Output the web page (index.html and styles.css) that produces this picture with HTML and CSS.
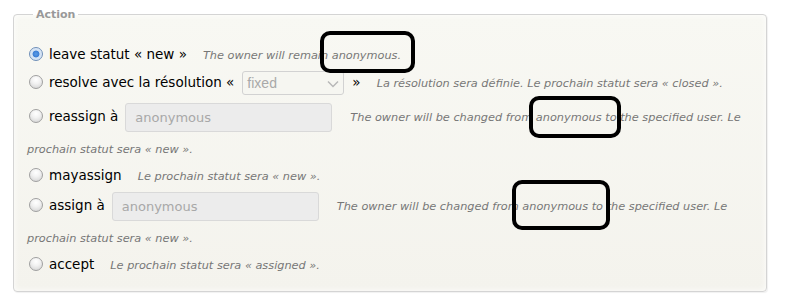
FILE: index.html
```html
<!DOCTYPE html>
<html>
<head>
<meta charset="utf-8">
<link rel="stylesheet" href="styles.css">
</head>
<body>
<div class="page">
  <fieldset class="action">
    <legend>Action</legend>
    <div class="row r-leave">
      <input type="radio" name="act" checked><label>leave statut « new »</label><span class="hint">The owner will remain anonymous.</span>
    </div>
    <div class="row r-resolve">
      <input type="radio" name="act"><label>resolve avec la résolution «</label><span class="sel">fixed<svg width="12" height="8" viewBox="0 0 12 8"><path d="M1 1.5 L6 6.5 L11 1.5" fill="none" stroke="#b8b8b8" stroke-width="1.5"/></svg></span><label class="close">»</label><span class="hint">La résolution sera définie. Le prochain statut sera « closed ».</span>
    </div>
    <div class="row r-wrap r-reassign">
      <input type="radio" name="act"><label>reassign à</label><span class="field f1">anonymous</span><span class="hint h-input">The owner will be changed from anonymous to the specified user. Le prochain statut sera « new ».</span>
    </div>
    <div class="row r-may">
      <input type="radio" name="act"><label>mayassign</label><span class="hint">Le prochain statut sera « new ».</span>
    </div>
    <div class="row r-wrap r-assign">
      <input type="radio" name="act"><label>assign à</label><span class="field f2">anonymous</span><span class="hint h-input">The owner will be changed from anonymous to the specified user. Le prochain statut sera « new ».</span>
    </div>
    <div class="row r-accept">
      <input type="radio" name="act"><label>accept</label><span class="hint">Le prochain statut sera « assigned ».</span>
    </div>
  </fieldset>
  <div class="mark m1"></div>
  <div class="mark m2"></div>
  <div class="mark m3"></div>
</div>
</body>
</html>
```
FILE: styles.css
```css
html, body {
  margin: 0;
  padding: 0;
  background: #fff;
}
.page {
  position: relative;
  width: 785px;
  height: 302px;
  padding: 8px 0 0 13px;
  box-sizing: border-box;
  font-family: "DejaVu Sans", Verdana, sans-serif;
  font-size: 13.5px;
  color: #000;
}
.action {
  margin: 0;
  width: 754px;
  height: 284px;
  box-sizing: border-box;
  border: 1px solid #d4d4d4;
  border-radius: 4px;
  background: linear-gradient(to bottom, #f8f8f3, #f4f3ed);
  box-shadow: inset 0 0 6px rgba(255,255,255,0.9), 1px 1px 1px rgba(0,0,0,0.06);
  padding: 23px 10px 0 13px;
}
.action legend {
  font-size: 11px;
  font-weight: bold;
  color: #999;
  padding: 0 3px;
  margin-left: 6px;
  line-height: 13px;
}
.row {
  line-height: 20px;
  margin-bottom: 5px;
}
.r-resolve {
  margin-bottom: 6px;
}
.r-may {
  margin-bottom: 3px;
}
.row input[type=radio] {
  appearance: none;
  -webkit-appearance: none;
  width: 14px;
  height: 14px;
  margin: 0 6px 0 2px;
  border: 1px solid #a0a0a0;
  border-radius: 50%;
  background: radial-gradient(circle at 50% 30%, #ffffff 0%, #f2f2f2 40%, #cfcfcf 100%);
  vertical-align: -2px;
  box-sizing: border-box;
}
.row input[type=radio]:checked {
  border-color: #6f8fb8;
  background: radial-gradient(circle at 50% 50%, #5a9be6 0%, #3d7fd6 35%, #cfe0f4 45%, #e8f0fa 100%);
}
.row label {
  color: #000;
}
.hint {
  font-size: 11.3px;
  font-style: italic;
  color: #777;
  margin-left: 16px;
}
.h-input {
  margin-left: 18px;
}
.sel {
  display: inline-block;
  box-sizing: border-box;
  width: 102px;
  height: 24px;
  margin-left: 8px;
  border: 1px solid #d2d2d2;
  border-radius: 3px;
  background: #f6f6f1;
  color: #a9a9a9;
  font-family: "Liberation Sans", Arial, sans-serif;
  font-size: 14px;
  line-height: 22px;
  padding: 0 6px 0 4px;
  vertical-align: middle;
  position: relative;
}
.sel svg {
  position: absolute;
  right: 4px;
  top: 8px;
}
.close {
  margin-left: 8px;
}
.field {
  display: inline-block;
  box-sizing: border-box;
  width: 207px;
  height: 29px;
  margin-left: 7px;
  border: 1px solid #d9d9d9;
  border-radius: 3px;
  background: #ececec;
  color: #a8a8a8;
  font-size: 13px;
  line-height: 27px;
  padding: 0 9px;
  vertical-align: middle;
}
.r-wrap {
  line-height: 30px;
  margin-bottom: 0;
}
.mark {
  position: absolute;
  border: 4px solid #000;
  border-radius: 10px;
  box-sizing: border-box;
}
.m1 { left: 320px; top: 31px; width: 95px; height: 42px; }
.m2 { left: 529px; top: 96px; width: 92px; height: 42px; }
.m3 { left: 512px; top: 180px; width: 98px; height: 50px; }
```
